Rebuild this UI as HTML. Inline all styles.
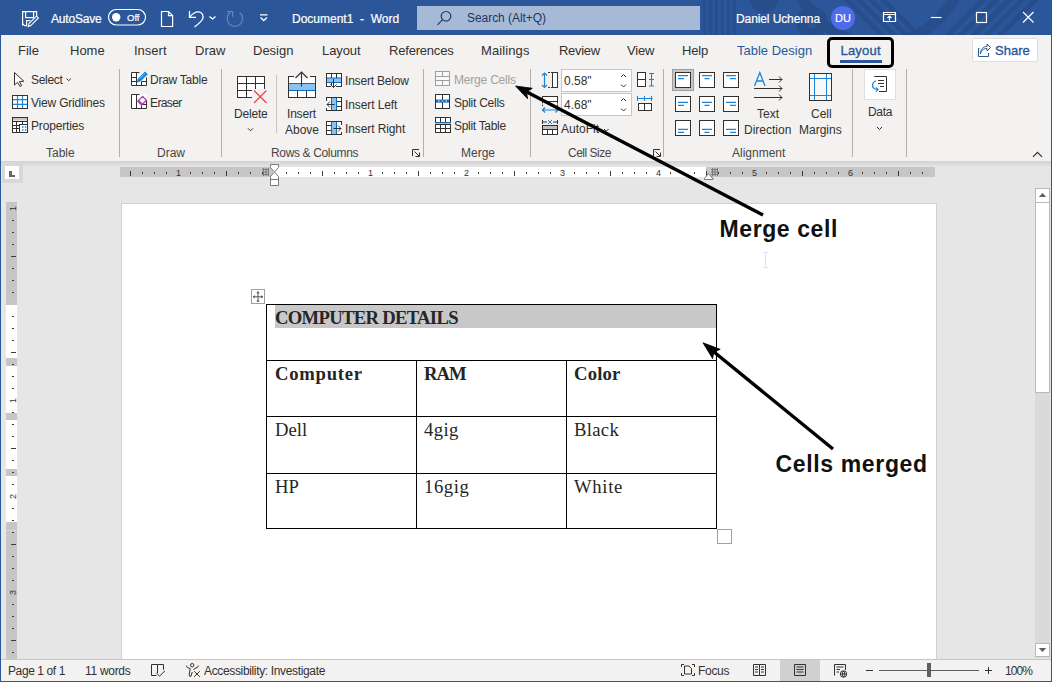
<!DOCTYPE html>
<html><head><meta charset="utf-8">
<style>
*{margin:0;padding:0;box-sizing:border-box}
html,body{width:1052px;height:682px;overflow:hidden}
body{background:#2b579a;position:relative;font-family:"Liberation Sans",sans-serif;color:#262626}
.a{position:absolute}
.t{position:absolute;white-space:pre;line-height:1}
#title{left:0;top:0;width:1052px;height:35px;background:#2b579a;overflow:hidden}
#ribbon{left:1px;top:35px;width:1050px;height:126px;background:#f3f2f1}
#doc{left:1px;top:162px;width:1050px;height:497px;background:#e6e6e6;overflow:hidden}
#status{left:1px;top:659px;width:1050px;height:22px;background:#f3f2f1;border-top:1px solid #c8c6c4}
.tw{color:#fff;font-size:12.5px;-webkit-text-stroke:0.2px #fff}
.tab{font-size:13px;color:#323130;top:44px}
.bd{-webkit-text-stroke:0.35px currentColor}
.rb{font-size:12px;color:#323130}
.gl{font-size:12px;color:#484644;top:147px}
.sep{position:absolute;width:1px;background:#c8c6c4;top:69px;height:88px}
.sb{font-size:12px;color:#323130;top:665px}
</style></head><body>
<div id="title" class="a">
  <svg class="a" style="left:0;top:0" width="1052" height="35">
    <g fill="#274d8b">
      <rect x="703" y="0" width="2.5" height="35"/><rect x="709" y="0" width="2.5" height="35"/><rect x="715" y="0" width="2.5" height="35"/><rect x="721" y="0" width="2.5" height="35"/><rect x="727" y="0" width="2.5" height="35"/><rect x="733" y="0" width="2.5" height="35"/>
      <circle cx="764" cy="-1" r="14"/>
    </g>
    <g fill="none" stroke="#274d8b">
      <circle cx="812" cy="22" r="11" stroke-width="10"/>
      <path d="M920 -35 A 90 90 0 0 1 925 40" stroke-width="0"/>
      <circle cx="878" cy="-42" r="86" stroke-width="11"/>
      <path d="M845 -2 L885 38 M857 -2 L897 38 M869 -2 L909 38 M881 -2 L921 38" stroke-width="5"/>
      <path d="M985 -2 L945 38 M998 -2 L958 38 M1011 -2 L971 38 M1024 -2 L984 38 M1037 -2 L997 38" stroke-width="5"/>
    </g>
    <g fill="none" stroke="#fff" stroke-width="1.2">
      <path d="M22.6 25.6 V11.6 H36.6 V16.5"/>
      <path d="M22.6 23.6 L24.6 25.6 H26.6 V20.6 H30.5"/>
      <path d="M25.6 11.6 V17.6 H33.6 V11.6"/>
      <path d="M28.3 26.6 L29 23.5 L36.6 16.2 L38.4 18 L30.8 25.6 Z" stroke-width="1.1"/>
      <rect x="108.5" y="9.5" width="37" height="15.5" rx="7.75"/>
      <path d="M161.5 11.5 H168.5 L172.6 15.6 V26.5 H161.5 Z M168.5 11.5 V15.6 H172.6"/>
      <path d="M189.5 11 V17.4 H196" stroke-width="1.3"/>
      <path d="M189.9 17.1 C192.5 13.2 196 11.6 199 11.8 C202.5 12.2 203.9 16 202.6 19 C201.2 22 197.5 24.6 194.5 26.9" stroke-width="1.3"/>
      <path d="M209.5 16.4 L212.5 19 L215.5 16.4" stroke-width="1.3"/>
      <path d="M260 14.8 H267.5 M260.5 17.5 L263.7 20.5 L267 17.5" stroke-width="1.3"/>
      <g opacity="0.28"><path d="M239.6 12.6 A7.7 7.7 0 1 1 230.2 12.6" stroke-width="1.2"/><path d="M227 11.6 H232.6 V16.8" stroke-width="1.2"/></g>
      <path d="M883.5 12.5 H895.5 V21.5 H883.5 Z M883.5 14.5 H895.5 M889.5 20.5 V16.5 M887.5 18 L889.5 16 L891.5 18"/>
      <path d="M931 17.5 H941.5"/>
      <rect x="976.5" y="12.5" width="10" height="10"/>
      <path d="M1023 12 L1033.5 22.5 M1033.5 12 L1023 22.5"/>
    </g>
    <circle cx="116.2" cy="17.2" r="4.2" fill="#fff"/>
    <rect x="417" y="6" width="283" height="24" fill="#a6bad8"/>
    <g fill="none" stroke="#1e3c6b" stroke-width="1.2"><circle cx="446" cy="16.3" r="4.8"/><path d="M442.6 19.7 L437.4 24.9"/></g>
    <circle cx="843" cy="18" r="12" fill="#4f6bed"/>
  </svg>
  <div class="t tw" style="left:51px;top:13.3px;font-size:12px;letter-spacing:-0.2px">AutoSave</div>
  <div class="t tw" style="left:127px;top:13px;font-size:9.5px">Off</div>
  <div class="t tw" style="left:292px;top:13.3px;font-size:12px">Document1  -  Word</div>
  <div class="t" style="left:467px;top:12px;font-size:12px;color:#1b365f;letter-spacing:-0.05px">Search (Alt+Q)</div>
  <div class="t tw" style="left:736px;top:13.3px;font-size:12px;letter-spacing:-0.1px">Daniel Uchenna</div>
  <div class="t tw" style="left:835px;top:13px;font-size:11px">DU</div>
</div>
<div id="ribbon" class="a"></div>
<div class="t tab" style="left:18px">File</div>
<div class="t tab" style="left:70px">Home</div>
<div class="t tab" style="left:134px">Insert</div>
<div class="t tab" style="left:195px">Draw</div>
<div class="t tab" style="left:253px">Design</div>
<div class="t tab" style="left:322px;letter-spacing:-0.1px">Layout</div>
<div class="t tab" style="left:389px;letter-spacing:-0.2px">References</div>
<div class="t tab" style="left:481px;letter-spacing:0.1px">Mailings</div>
<div class="t tab" style="left:559px;letter-spacing:-0.3px">Review</div>
<div class="t tab" style="left:627px;letter-spacing:-0.2px">View</div>
<div class="t tab" style="left:682px;letter-spacing:-0.2px">Help</div>
<div class="t tab" style="left:737px;color:#2b579a">Table Design</div>
<div class="t tab bd" style="left:840.5px;color:#2b579a;letter-spacing:0.2px">Layout</div>
<div class="a" style="left:840px;top:60px;width:42px;height:3px;background:#2b579a"></div>
<div class="a" style="left:827px;top:37px;width:67px;height:31px;border:3px solid #000;border-radius:5px"></div>
<div class="a" style="left:972px;top:38px;width:66px;height:24px;background:#fff;border:1px solid #e1dfdd;border-radius:2px"></div>
<div class="t tab bd" style="left:995px;top:44px;color:#2b579a">Share</div>
<svg class="a" style="left:976px;top:42px" width="16" height="16"><g fill="none" stroke="#2b579a" stroke-width="1"><path d="M3.5 6.5 H2.5 V14.5 H12.5 V11"/><path d="M4.5 12 C5 8 8 6.5 11 6.5 V9 L14.5 5.5 L11 2 V4.5 C7 4.5 4.5 7.5 4.5 12 Z"/></g></svg>
<!--RIBBONBODY-->
<svg class="a" style="left:0;top:0" width="1052" height="170">
 <g fill="none" stroke="#b3b0ad" stroke-width="1">
  <path d="M119.5 69 V157 M221.5 69 V157 M423.5 69 V157 M530.5 69 V157 M663.5 69 V157 M852.5 69 V157 M906.5 69 V157"/><path d="M276.5 75 V133" stroke="#c8c6c4"/>
 </g>
 <!-- select cursor -->
 <path d="M14.5 72.5 V85 L17.6 82.3 L20 86.5 L21.6 85.6 L19.4 81.5 L23.8 81.2 Z" fill="#fff" stroke="#323130" stroke-width="1" stroke-linejoin="round"/>
 <path d="M66.5 78.5 L68.7 80.7 L70.9 78.5" fill="none" stroke="#323130" stroke-width="1"/>
 <!-- view gridlines -->
 <rect x="12.5" y="95.5" width="15" height="13" fill="#fff" stroke="#323130"/>
 <path d="M17.5 96 V108 M22.5 96 V108 M13 99.7 H27 M13 104.3 H27" stroke="#1b84d8" stroke-width="1.2"/>
 <!-- properties -->
 <rect x="12.5" y="117.5" width="15" height="15" fill="#fff" stroke="#323130"/>
 <rect x="13" y="118" width="14" height="2.5" fill="#c8c6c4"/>
 <path d="M13 121.5 H27 M13 125.5 H19 M13 128.5 H19 M16.5 121.5 V132.5 M22.5 121.5 V124" stroke="#323130" stroke-width="1" fill="none"/>
 <rect x="19.5" y="124.5" width="8" height="8" fill="#fff" stroke="#323130"/>
 <path d="M22 127 h1.5 M24.8 127 h1.5 M22 130 h1.5 M24.8 130 h1.5" stroke="#1b84d8" stroke-width="1.4"/>
 <!-- draw table -->
 <rect x="131.5" y="72.5" width="15" height="13" fill="#fff"/>
 <rect x="131.5" y="94.5" width="15" height="14" fill="#fff"/>
 <g fill="none" stroke="#323130" stroke-width="1">
  <path d="M131.5 85.5 V72.5 H139.5 M146.5 77.5 V85.5 H131.5 M136.5 72.5 V85.5 M141.5 81.5 V85.5 M131.5 77.5 H136.5 M131.5 81.5 H137 M141.5 81.5 H146.5"/>
  <path d="M131.5 108.5 V94.5 H139.5 M146.5 100.5 V108.5 H131.5 M136.5 94.5 V108.5 M141.5 104.5 V108.5 M141.5 104.5 H146.5"/>
 </g>
 <path d="M137.3 82 L138.3 78.6 L145 71.9 L147.3 74.2 L140.6 80.9 Z" fill="#1b84d8" stroke="#1b84d8" stroke-width="1" stroke-linejoin="round"/>
 <path d="M139.8 78.4 L144.9 73.3" stroke="#fff" stroke-width="0.8" stroke-dasharray="1.2 1"/>
 <path d="M137.8 101.2 L142.6 96.4 L146.4 100.2 L141.6 105 Z" fill="#fff" stroke="#a83cb5" stroke-width="1.3" stroke-linejoin="round"/>
 <path d="M137.8 101.2 L139 100 L142.8 103.8 L141.6 105 Z" fill="#a83cb5"/>
 <!-- delete -->
 <rect x="237.5" y="76.5" width="27" height="21" fill="#fff" stroke="#323130"/>
 <path d="M246.5 77 V97 M255.5 77 V97 M238 83.5 H264 M238 90.5 H264" stroke="#323130" fill="none"/>
 <rect x="252" y="89" width="16" height="15" fill="#f3f2f1"/>
 <path d="M238 90.5 H252 M246.5 90.5 V97 M238 97.5 H252 M264.5 77 V89" stroke="#323130" fill="none"/>
 <path d="M254 90.5 L266.5 103 M266.5 90.5 L254 103" stroke="#e8474b" stroke-width="1.3"/>
 <path d="M248 128.3 L250.5 130.8 L253 128.3" fill="none" stroke="#323130"/>
 <!-- insert above -->
 <rect x="288.5" y="76.5" width="27" height="21" fill="#fff" stroke="#323130"/>
 <rect x="289" y="83.5" width="26" height="7" fill="#8cc2f0"/>
 <path d="M289 83.5 H315 M289 90.5 H315" stroke="#1068b9" stroke-width="1.2"/>
 <path d="M297.5 91 V97 M306.5 91 V97" stroke="#323130"/>
 <rect x="294" y="74" width="16" height="4" fill="#f3f2f1"/>
 <path d="M288.5 77 V76.5 H294 M310 76.5 H315.5" stroke="#323130" fill="none"/>
 <path d="M301.5 86.5 V72 M295.5 78 L301.5 72 L307.5 78" stroke="#323130" fill="none" stroke-width="1.1"/>
 <!-- insert below -->
 <rect x="326.5" y="73.5" width="15" height="13" fill="#fff" stroke="#323130"/>
 <rect x="327" y="78" width="14" height="4.5" fill="#8cc2f0"/>
 <path d="M327 78 H341 M327 82.5 H341" stroke="#1068b9" stroke-width="1"/>
 <path d="M331.5 74 V78 M336.5 74 V78 M331.5 83 V86" stroke="#323130"/>
 <rect x="331" y="86" width="5" height="2" fill="#f3f2f1"/>
 <path d="M333.5 79 V87.5 M330.5 84.5 L333.5 87.5 L336.5 84.5" stroke="#323130" fill="none"/>
 <!-- insert left -->
 <rect x="326.5" y="97.5" width="15" height="13" fill="#fff" stroke="#323130"/>
 <rect x="331.5" y="98" width="5" height="12" fill="#8cc2f0"/>
 <path d="M331.5 98 V110 M336.5 98 V110" stroke="#1068b9"/>
 <path d="M337 101.5 H341 M337 106.5 H341" stroke="#323130"/>
 <rect x="326" y="101" width="1.5" height="7" fill="#fff"/>
 <path d="M334.5 104.5 H327 M330 101.5 L327 104.5 L330 107.5" stroke="#323130" fill="none"/>
 <!-- insert right -->
 <rect x="326.5" y="121.5" width="15" height="13" fill="#fff" stroke="#323130"/>
 <rect x="331.5" y="122" width="5" height="12" fill="#8cc2f0"/>
 <path d="M331.5 122 V134 M336.5 122 V134" stroke="#1068b9"/>
 <path d="M327 125.5 H331 M327 130.5 H331" stroke="#323130"/>
 <rect x="340.5" y="125" width="1.5" height="7" fill="#fff"/>
 <path d="M333.5 128.5 H341 M338 125.5 L341 128.5 L338 131.5" stroke="#323130" fill="none"/>
 <path d="M412.5 156 V149.5 H419 M414.5 151.5 L419 156 M419.5 152.5 V156.5 H415.5" stroke="#323130" fill="none"/>
 <!-- merge cells -->
 <rect x="435.5" y="71.5" width="14" height="14" fill="#f8f8f8" stroke="#a19f9d"/>
 <path d="M436 76.5 H449 M436 80.5 H449 M442.5 72 V76.5 M442.5 80.5 V85" stroke="#a19f9d" fill="none"/>
 <!-- split cells -->
 <rect x="435.5" y="94.5" width="14" height="14" fill="#fff" stroke="#323130"/>
 <path d="M442.5 95 V108" stroke="#323130"/>
 <rect x="436" y="99.6" width="13" height="3" fill="#1068b9"/>
 <path d="M438 101 h1.5 M441.7 101 h1.5 M445.4 101 h1.5" stroke="#fff" stroke-width="1.2"/>
 <!-- split table -->
 <rect x="435.5" y="117.5" width="15" height="5" fill="#fff" stroke="#323130"/>
 <path d="M440.5 118 V122 M445.5 118 V122" stroke="#323130"/>
 <path d="M435 122.8 H451 M435 124.3 H451" stroke="#1b84d8" stroke-width="1"/>
 <rect x="435.5" y="124.5" width="15" height="8" fill="#fff" stroke="#323130"/>
 <path d="M436 128.5 H450 M440.5 125 V132 M445.5 125 V132" stroke="#323130"/>
 <!-- height icon -->
 <path d="M544.5 73 V87.5 M542 75.5 L544.5 73 L547 75.5 M542 85 L544.5 87.5 L547 85" stroke="#1b84d8" fill="none" stroke-width="1.2"/>
 <path d="M548 72.5 H552 M548 87.5 H552" stroke="#323130" stroke-dasharray="2 1"/>
 <rect x="552.5" y="72.5" width="5" height="15" fill="#fff" stroke="#323130"/>
 <!-- inputs -->
 <rect x="561.5" y="69.5" width="70" height="22" fill="#fff" stroke="#c8c6c4"/>
 <rect x="561.5" y="93.5" width="70" height="22" fill="#fff" stroke="#c8c6c4"/>
 <path d="M621 77 L623.5 74.5 L626 77 M621 84.5 L623.5 87 L626 84.5 M621 101 L623.5 98.5 L626 101 M621 108.5 L623.5 111 L626 108.5" stroke="#323130" fill="none"/>
 <!-- width icon -->
 <rect x="542.5" y="96.5" width="15" height="5" fill="#fff" stroke="#323130"/>
 <path d="M542.5 102 V106 M557.5 102 V106" stroke="#323130" stroke-dasharray="1.5 1"/>
 <path d="M542.5 110 H558 M545 107.5 L542.5 110 L545 112.5 M555.5 107.5 L558 110 L555.5 112.5" stroke="#1b84d8" fill="none" stroke-width="1.2"/>
 <!-- distribute rows -->
 <rect x="637.5" y="72.5" width="8" height="14" fill="#fff" stroke="#323130"/>
 <path d="M638 79.5 H645" stroke="#323130"/>
 <path d="M651.5 73 V86.5 M649 73.5 H654 M649 79.5 H654 M649 86 H654" stroke="#1b84d8" fill="none" stroke-width="1.1"/>
 <!-- distribute cols -->
 <path d="M637 98.5 H652.5 M637.5 96 V101 M644.5 96 V101 M651.5 96 V101" stroke="#1b84d8" fill="none" stroke-width="1.1"/>
 <rect x="638.5" y="103.5" width="13" height="7" fill="#fff" stroke="#323130"/>
 <path d="M644.5 104 V110" stroke="#323130"/>
 <!-- autofit -->
 <path d="M542.5 120 V124 M557.5 120 V124 M542.5 122 H547 M553 122 H557.5" stroke="#323130" fill="none"/>
 <path d="M548 120 L552 124 M552 120 L548 124" stroke="#1b84d8" stroke-width="1"/>
 <rect x="542.5" y="125.5" width="15" height="9" fill="#fff" stroke="#323130"/>
 <rect x="543" y="126" width="14" height="3" fill="#bebebe"/>
 <path d="M543 129.5 H557 M547.5 130 V134 M552.5 130 V134" stroke="#323130"/>
 <path d="M604 129 L606.3 131.3 L608.6 129" stroke="#323130" fill="none"/>
 <path d="M653.5 156 V149.5 H660 M655.5 151.5 L660 156 M660.5 152.5 V156.5 H656.5" stroke="#323130" fill="none"/>
 <!-- alignment -->
 <rect x="672.5" y="69.5" width="21" height="21" fill="#c8c6c4" stroke="#a19f9d"/>
 <g fill="#fff" stroke="#323130">
  <rect x="675.5" y="72.5" width="15" height="15"/><rect x="699.5" y="72.5" width="15" height="15"/><rect x="723.5" y="72.5" width="15" height="15"/>
  <rect x="675.5" y="96.5" width="15" height="15"/><rect x="699.5" y="96.5" width="15" height="15"/><rect x="723.5" y="96.5" width="15" height="15"/>
  <rect x="675.5" y="120.5" width="15" height="15"/><rect x="699.5" y="120.5" width="15" height="15"/><rect x="723.5" y="120.5" width="15" height="15"/>
 </g>
 <g stroke="#1b84d8" stroke-width="1.2" fill="none">
  <path d="M678 75.6 H688 M678 78.6 H684 M702 75.6 H712 M704.5 78.6 H709.5 M726 75.6 H736 M730 78.6 H736"/>
  <path d="M678 102.4 H688 M678 105.4 H684 M702 102.4 H712 M704.5 105.4 H709.5 M726 102.4 H736 M730 105.4 H736"/>
  <path d="M678 129.4 H688 M678 132.4 H684 M702 129.4 H712 M704.5 132.4 H709.5 M726 129.4 H736 M730 132.4 H736"/>
 </g>
 <path d="M754.5 86 L759.8 72.5 L765 86 M756.6 81 H763" stroke="#1b84d8" stroke-width="1.3" fill="none"/>
 <path d="M769 79.5 H782 M779 76.5 L782 79.5 L779 82.5 M754 88.5 H782 M779 85.5 L782 88.5 L779 91.5 M754 97.5 H782 M779 94.5 L782 97.5 L779 100.5" stroke="#323130" stroke-width="1" fill="none"/>
 <!-- cell margins -->
 <rect x="809.5" y="73.5" width="22" height="27" fill="#f8f8f8" stroke="#323130"/>
 <path d="M814.5 74 V100 M826.5 74 V100 M810 78.5 H831 M810 95.5 H831" stroke="#1b84d8" stroke-width="1"/>
 <!-- data -->
 <rect x="864.5" y="69.5" width="31" height="30" fill="#fff" stroke="#e1dfdd"/>
 <path d="M874.5 77 V76.5 H886.5 V91.5 H879" stroke="#323130" fill="none"/>
 <path d="M878 80.5 H884 M878 83.5 H884 M880 86.5 H884" stroke="#323130" fill="none"/>
 <path d="M876 81 C872 82 871 87 875 89 L878 89.5 M876 87.5 L878 89.5 L876 91.5" stroke="#1b84d8" fill="none" stroke-width="1.2"/>
 <path d="M877 127 L879.5 129.5 L882 127" stroke="#323130" fill="none"/>
 <path d="M1033 156.8 L1037.5 152.3 L1042 156.8" stroke="#323130" stroke-width="1.2" fill="none"/>
</svg>
<div class="t rb" style="left:31px;top:74px;letter-spacing:-0.3px">Select</div>
<div class="t rb" style="left:31px;top:96.8px;letter-spacing:-0.2px">View Gridlines</div>
<div class="t rb" style="left:31px;top:120.3px;letter-spacing:-0.15px">Properties</div>
<div class="t gl" style="left:46px;top:147.3px">Table</div>
<div class="t rb" style="left:150px;top:74px;letter-spacing:-0.25px">Draw Table</div>
<div class="t rb" style="left:150px;top:96.8px;letter-spacing:-0.6px">Eraser</div>
<div class="t gl" style="left:157px;top:147.3px">Draw</div>
<div class="t rb" style="left:234px;top:108.3px;letter-spacing:-0.2px">Delete</div>
<div class="t rb" style="left:287px;top:108.3px;letter-spacing:-0.2px">Insert</div>
<div class="t rb" style="left:285px;top:123.7px">Above</div>
<div class="t rb" style="left:345px;top:74.8px;letter-spacing:-0.2px">Insert Below</div>
<div class="t rb" style="left:345px;top:98.8px;letter-spacing:-0.1px">Insert Left</div>
<div class="t rb" style="left:345px;top:123px;letter-spacing:-0.1px">Insert Right</div>
<div class="t gl" style="left:271px;top:147.3px;letter-spacing:-0.35px">Rows &amp; Columns</div>
<div class="t rb" style="left:454px;top:74px;color:#a19f9d;letter-spacing:-0.2px">Merge Cells</div>
<div class="t rb" style="left:454px;top:96.8px;letter-spacing:-0.25px">Split Cells</div>
<div class="t rb" style="left:454px;top:120px;letter-spacing:-0.3px">Split Table</div>
<div class="t gl" style="left:461px;top:147.3px">Merge</div>
<div class="t rb" style="left:564px;top:75.3px">0.58"</div>
<div class="t rb" style="left:564px;top:99.4px">4.68"</div>
<div class="t rb" style="left:561px;top:123.2px">AutoFit</div>
<div class="t gl" style="left:568px;top:147.3px;letter-spacing:-0.5px">Cell Size</div>
<div class="t rb" style="left:757px;top:107.6px">Text</div>
<div class="t rb" style="left:744px;top:123.6px">Direction</div>
<div class="t rb" style="left:811px;top:107.6px">Cell</div>
<div class="t rb" style="left:799px;top:123.6px">Margins</div>
<div class="t gl" style="left:732px;top:147.3px">Alignment</div>
<div class="t rb" style="left:868px;top:106.1px;letter-spacing:-0.3px">Data</div>
<div class="a" style="left:1px;top:161px;width:1050px;height:1px;background:#d6d4d2"></div>
<div id="doc" class="a">
  <div class="a" style="left:0;top:0;width:1050px;height:5px;background:linear-gradient(#d6d4d2,#e6e6e6)"></div>
  <div class="a" style="left:1px;top:0;width:21px;height:21px;background:#d8d8d8"></div>
  <div class="a" style="left:4px;top:4px;width:14px;height:13px;background:#fff"></div>
  <div class="a" style="left:8px;top:9px;width:2.5px;height:6px;background:#666"></div>
  <div class="a" style="left:8px;top:13px;width:6px;height:2px;background:#666"></div>
  <div class="a" style="left:120px;top:41px;width:816px;height:460px;background:#fff;border:1px solid #d0d0d0;border-bottom:none"></div>
  <div class="a" style="left:1034px;top:26px;width:15px;height:470px;background:#dadada"></div>
  <div class="a" style="left:1034px;top:26px;width:15px;height:205px;background:#fff;border:1px solid #b9b9b9"></div>
  <div class="a" style="left:1034px;top:26px;width:15px;height:15px;background:#fff;border:1px solid #b9b9b9"></div>
  <div class="a" style="left:1034px;top:481px;width:15px;height:14px;background:#fff;border:1px solid #b9b9b9"></div>
</div>
<svg class="a" style="left:0;top:0" width="1052" height="682">
<rect x="120" y="167" width="815" height="10" fill="#c6c6c6"/>
<rect x="273" y="167" width="433" height="10" fill="#fff"/>
<rect x="130" y="171" width="1" height="5" fill="#3b3b3b"/>
<rect x="142" y="172" width="1" height="2" fill="#3b3b3b"/>
<rect x="154" y="172" width="1" height="2" fill="#3b3b3b"/>
<rect x="166" y="172" width="1" height="2" fill="#3b3b3b"/>
<rect x="190" y="172" width="1" height="2" fill="#3b3b3b"/>
<rect x="202" y="172" width="1" height="2" fill="#3b3b3b"/>
<rect x="214" y="172" width="1" height="2" fill="#3b3b3b"/>
<rect x="226" y="171" width="1" height="5" fill="#3b3b3b"/>
<rect x="238" y="172" width="1" height="2" fill="#3b3b3b"/>
<rect x="250" y="172" width="1" height="2" fill="#3b3b3b"/>
<rect x="262" y="172" width="1" height="2" fill="#3b3b3b"/>
<rect x="286" y="172" width="1" height="2" fill="#3b3b3b"/>
<rect x="298" y="172" width="1" height="2" fill="#3b3b3b"/>
<rect x="310" y="172" width="1" height="2" fill="#3b3b3b"/>
<rect x="322" y="171" width="1" height="5" fill="#3b3b3b"/>
<rect x="334" y="172" width="1" height="2" fill="#3b3b3b"/>
<rect x="346" y="172" width="1" height="2" fill="#3b3b3b"/>
<rect x="358" y="172" width="1" height="2" fill="#3b3b3b"/>
<rect x="382" y="172" width="1" height="2" fill="#3b3b3b"/>
<rect x="394" y="172" width="1" height="2" fill="#3b3b3b"/>
<rect x="406" y="172" width="1" height="2" fill="#3b3b3b"/>
<rect x="418" y="171" width="1" height="5" fill="#3b3b3b"/>
<rect x="430" y="172" width="1" height="2" fill="#3b3b3b"/>
<rect x="442" y="172" width="1" height="2" fill="#3b3b3b"/>
<rect x="454" y="172" width="1" height="2" fill="#3b3b3b"/>
<rect x="478" y="172" width="1" height="2" fill="#3b3b3b"/>
<rect x="490" y="172" width="1" height="2" fill="#3b3b3b"/>
<rect x="502" y="172" width="1" height="2" fill="#3b3b3b"/>
<rect x="514" y="171" width="1" height="5" fill="#3b3b3b"/>
<rect x="526" y="172" width="1" height="2" fill="#3b3b3b"/>
<rect x="538" y="172" width="1" height="2" fill="#3b3b3b"/>
<rect x="550" y="172" width="1" height="2" fill="#3b3b3b"/>
<rect x="574" y="172" width="1" height="2" fill="#3b3b3b"/>
<rect x="586" y="172" width="1" height="2" fill="#3b3b3b"/>
<rect x="598" y="172" width="1" height="2" fill="#3b3b3b"/>
<rect x="610" y="171" width="1" height="5" fill="#3b3b3b"/>
<rect x="622" y="172" width="1" height="2" fill="#3b3b3b"/>
<rect x="634" y="172" width="1" height="2" fill="#3b3b3b"/>
<rect x="646" y="172" width="1" height="2" fill="#3b3b3b"/>
<rect x="670" y="172" width="1" height="2" fill="#3b3b3b"/>
<rect x="682" y="172" width="1" height="2" fill="#3b3b3b"/>
<rect x="694" y="172" width="1" height="2" fill="#3b3b3b"/>
<rect x="706" y="171" width="1" height="5" fill="#3b3b3b"/>
<rect x="718" y="172" width="1" height="2" fill="#3b3b3b"/>
<rect x="730" y="172" width="1" height="2" fill="#3b3b3b"/>
<rect x="742" y="172" width="1" height="2" fill="#3b3b3b"/>
<rect x="766" y="172" width="1" height="2" fill="#3b3b3b"/>
<rect x="778" y="172" width="1" height="2" fill="#3b3b3b"/>
<rect x="790" y="172" width="1" height="2" fill="#3b3b3b"/>
<rect x="802" y="171" width="1" height="5" fill="#3b3b3b"/>
<rect x="814" y="172" width="1" height="2" fill="#3b3b3b"/>
<rect x="826" y="172" width="1" height="2" fill="#3b3b3b"/>
<rect x="838" y="172" width="1" height="2" fill="#3b3b3b"/>
<rect x="862" y="172" width="1" height="2" fill="#3b3b3b"/>
<rect x="874" y="172" width="1" height="2" fill="#3b3b3b"/>
<rect x="886" y="172" width="1" height="2" fill="#3b3b3b"/>
<rect x="898" y="171" width="1" height="5" fill="#3b3b3b"/>
<rect x="910" y="172" width="1" height="2" fill="#3b3b3b"/>
<rect x="922" y="172" width="1" height="2" fill="#3b3b3b"/>
<text x="178.5" y="176" font-size="9" text-anchor="middle" fill="#333" font-family="Liberation Sans">1</text>
<text x="370.5" y="176" font-size="9" text-anchor="middle" fill="#333" font-family="Liberation Sans">1</text>
<text x="466.5" y="176" font-size="9" text-anchor="middle" fill="#333" font-family="Liberation Sans">2</text>
<text x="562.5" y="176" font-size="9" text-anchor="middle" fill="#333" font-family="Liberation Sans">3</text>
<text x="658.5" y="176" font-size="9" text-anchor="middle" fill="#333" font-family="Liberation Sans">4</text>
<text x="754.5" y="176" font-size="9" text-anchor="middle" fill="#333" font-family="Liberation Sans">5</text>
<text x="850.5" y="176" font-size="9" text-anchor="middle" fill="#333" font-family="Liberation Sans">6</text>
<g stroke="#7a7a7a" stroke-width="1"><path d="M262 169.5 H269 M262 172 H269 M262 174.5 H269 M263.5 168 V176 M266 168 V176 M268.5 168 V176"/></g>
<g stroke="#7a7a7a" stroke-width="1"><path d="M711 169.5 H718 M711 172 H718 M711 174.5 H718 M712.5 168 V176 M715 168 V176 M717.5 168 V176"/></g>
<path d="M270.5 164.5 H278.5 V167.5 L274.5 172 L270.5 167.5 Z" fill="#fff" stroke="#7a7a7a"/>
<path d="M274.5 172 L270.5 176.5 V185.5 H278.5 V176.5 Z" fill="#fff" stroke="#7a7a7a"/>
<path d="M270.5 179.5 H278.5" stroke="#7a7a7a"/>
<path d="M708.5 174.5 L704.5 178.5 V179.5 H713 V178.5 L709 174.5 Z" fill="#fff" stroke="#7a7a7a"/>
<path d="M704.5 178.5 L708.5 173.5 L712.5 178.5 V179.5 H704.5 Z" fill="#fff" stroke="#7a7a7a"/>
<rect x="6" y="202" width="11" height="460" fill="#c6c6c6"/>
<rect x="6" y="305" width="11" height="53" fill="#fff"/>
<rect x="6" y="366" width="11" height="47" fill="#fff"/>
<rect x="6" y="420" width="11" height="49" fill="#fff"/>
<rect x="6" y="476" width="11" height="46" fill="#fff"/>
<text x="0" y="0" font-size="9" text-anchor="middle" fill="#333" font-family="Liberation Sans" transform="translate(16 208.5) rotate(-90)">1</text>
<rect x="12" y="220" width="2" height="1" fill="#3b3b3b"/>
<rect x="12" y="232" width="2" height="1" fill="#3b3b3b"/>
<rect x="12" y="244" width="2" height="1" fill="#3b3b3b"/>
<rect x="11" y="256" width="5" height="1" fill="#3b3b3b"/>
<rect x="12" y="268" width="2" height="1" fill="#3b3b3b"/>
<rect x="12" y="280" width="2" height="1" fill="#3b3b3b"/>
<rect x="12" y="292" width="2" height="1" fill="#3b3b3b"/>
<rect x="12" y="316" width="2" height="1" fill="#3b3b3b"/>
<rect x="12" y="328" width="2" height="1" fill="#3b3b3b"/>
<rect x="12" y="340" width="2" height="1" fill="#3b3b3b"/>
<rect x="11" y="352" width="5" height="1" fill="#3b3b3b"/>
<rect x="12" y="364" width="2" height="1" fill="#3b3b3b"/>
<rect x="12" y="376" width="2" height="1" fill="#3b3b3b"/>
<rect x="12" y="388" width="2" height="1" fill="#3b3b3b"/>
<text x="0" y="0" font-size="9" text-anchor="middle" fill="#333" font-family="Liberation Sans" transform="translate(16 400.5) rotate(-90)">1</text>
<rect x="12" y="412" width="2" height="1" fill="#3b3b3b"/>
<rect x="12" y="424" width="2" height="1" fill="#3b3b3b"/>
<rect x="12" y="436" width="2" height="1" fill="#3b3b3b"/>
<rect x="11" y="448" width="5" height="1" fill="#3b3b3b"/>
<rect x="12" y="460" width="2" height="1" fill="#3b3b3b"/>
<rect x="12" y="472" width="2" height="1" fill="#3b3b3b"/>
<rect x="12" y="484" width="2" height="1" fill="#3b3b3b"/>
<text x="0" y="0" font-size="9" text-anchor="middle" fill="#333" font-family="Liberation Sans" transform="translate(16 496.5) rotate(-90)">2</text>
<rect x="12" y="508" width="2" height="1" fill="#3b3b3b"/>
<rect x="12" y="520" width="2" height="1" fill="#3b3b3b"/>
<rect x="12" y="532" width="2" height="1" fill="#3b3b3b"/>
<rect x="11" y="544" width="5" height="1" fill="#3b3b3b"/>
<rect x="12" y="556" width="2" height="1" fill="#3b3b3b"/>
<rect x="12" y="568" width="2" height="1" fill="#3b3b3b"/>
<rect x="12" y="580" width="2" height="1" fill="#3b3b3b"/>
<text x="0" y="0" font-size="9" text-anchor="middle" fill="#333" font-family="Liberation Sans" transform="translate(16 592.5) rotate(-90)">3</text>
<rect x="12" y="604" width="2" height="1" fill="#3b3b3b"/>
<rect x="12" y="616" width="2" height="1" fill="#3b3b3b"/>
<rect x="12" y="628" width="2" height="1" fill="#3b3b3b"/>
<rect x="11" y="640" width="5" height="1" fill="#3b3b3b"/>
<rect x="12" y="652" width="2" height="1" fill="#3b3b3b"/>
<rect x="6" y="530" width="11" height="1" fill="#d6d6d6"/>
<path d="M1038.8 197 L1042.5 193 L1046.2 197 Z" fill="#606060"/>
<path d="M1038.8 648 L1042.5 652 L1046.2 648 Z" fill="#606060"/>
</svg>
<div class="a" style="left:275px;top:305px;width:441px;height:22.5px;background:#c8c8c8"></div>
<svg class="a" style="left:0;top:0" width="1052" height="682">
 <g stroke="#000" stroke-width="1" fill="none">
  <rect x="266.5" y="304.5" width="450" height="224"/>
  <path d="M266.5 360.5 H716.5 M266.5 416.5 H716.5 M266.5 473.5 H716.5 M416.5 360.5 V528.5 M566.5 360.5 V528.5"/>
 </g>
 <rect x="251.5" y="289.5" width="13" height="14" fill="#fff" stroke="#a0a0a0"/>
 <path d="M258 291.5 V302 M253 296.8 H263" stroke="#555" stroke-width="1"/>
 <path d="M256.3 293.2 L258 291.3 L259.7 293.2 Z M256.3 300.4 L258 302.3 L259.7 300.4 Z M254.7 295.1 L252.8 296.8 L254.7 298.5 Z M261.3 295.1 L263.2 296.8 L261.3 298.5 Z" fill="#555"/>
 <rect x="717.5" y="529.5" width="14" height="14" fill="#fff" stroke="#a0a0a0"/>
 <path d="M765.5 252 V268 M763 252.5 H768 M763 267.5 H768" stroke="#e2e2e2" stroke-width="1"/>
</svg>
<div class="t" style="left:275px;top:308.6px;font-family:'Liberation Serif',serif;font-weight:700;font-size:18.67px;color:#262626;letter-spacing:-0.7px">COMPUTER DETAILS</div>
<div class="t" style="left:275px;top:365.4px;font-family:'Liberation Serif',serif;font-weight:700;font-size:18.67px;color:#262626;letter-spacing:0.75px">Computer</div>
<div class="t" style="left:424px;top:365.4px;font-family:'Liberation Serif',serif;font-weight:700;font-size:18.67px;color:#262626;letter-spacing:-1px">RAM</div>
<div class="t" style="left:574px;top:365.4px;font-family:'Liberation Serif',serif;font-weight:700;font-size:18.67px;color:#262626;letter-spacing:0.2px">Color</div>
<div class="t" style="left:275px;top:421.4px;font-family:'Liberation Serif',serif;font-size:18.67px;color:#262626">Dell</div>
<div class="t" style="left:424px;top:421.4px;font-family:'Liberation Serif',serif;font-size:18.67px;color:#262626;letter-spacing:0.4px">4gig</div>
<div class="t" style="left:574px;top:421.4px;font-family:'Liberation Serif',serif;font-size:18.67px;color:#262626;letter-spacing:0.3px">Black</div>
<div class="t" style="left:275px;top:478.4px;font-family:'Liberation Serif',serif;font-size:18.67px;color:#262626">HP</div>
<div class="t" style="left:424px;top:478.4px;font-family:'Liberation Serif',serif;font-size:18.67px;color:#262626;letter-spacing:0.6px">16gig</div>
<div class="t" style="left:574px;top:478.4px;font-family:'Liberation Serif',serif;font-size:18.67px;color:#262626;letter-spacing:0.7px">White</div>
<div class="t" style="left:719.5px;top:218px;font-weight:700;font-size:23px;color:#111;letter-spacing:0.6px">Merge cell</div>
<div class="t" style="left:775.5px;top:452.5px;font-weight:700;font-size:23px;color:#111;letter-spacing:0.65px">Cells merged</div>
<svg class="a" style="left:0;top:0" width="1052" height="682">
 <path d="M763 215 L524 90.5" stroke="#000" stroke-width="3.4" stroke-linecap="butt"/>
 <path d="M515.5 86 L532.3 88.3 L526.5 91.8 L527.6 98.8 Z" fill="#000" stroke="#000" stroke-width="0.8" stroke-linejoin="miter"/>
 <path d="M833 449 L711 349.5" stroke="#000" stroke-width="3.4"/>
 <path d="M703 342.8 L720.2 349.3 L713.8 352.2 L712.6 358.6 Z" fill="#000" stroke="#000" stroke-width="0.8"/>
</svg>

<div id="status" class="a"></div>
<div class="t sb" style="left:8px;top:664.5px;letter-spacing:-0.4px">Page 1 of 1</div>
<div class="t sb" style="left:85px;top:664.5px;letter-spacing:-0.3px">11 words</div>
<div class="t sb" style="left:204px;top:664.5px;letter-spacing:-0.35px">Accessibility: Investigate</div>
<div class="t sb" style="left:698px;top:664.5px;letter-spacing:-0.3px">Focus</div>
<div class="t sb" style="left:1005px;top:664.5px;letter-spacing:-0.9px">100%</div>
<div class="a" style="left:780px;top:660px;width:40px;height:21px;background:#d2d0ce"></div>
<svg class="a" style="left:0;top:0" width="1052" height="682">
 <g fill="none" stroke="#323130" stroke-width="1">
  <path d="M157.5 673 V664.5 H151.5 V675.5 H156.5 M157.5 664.5 H163.5 V669.8"/>
  <path d="M156.3 672.8 L159.5 676.2 L165 670.8"/>
  <circle cx="192.2" cy="665.2" r="1.7"/>
  <path d="M186.3 665.6 Q186.5 667.9 190.2 668.6 L189.2 674.8 Q189.2 677 190.9 676.3 L192.3 672"/>
  <path d="M198.4 665.6 Q198.3 667.7 194.6 668.6 L193.6 670"/>
  <path d="M194.2 671.2 L199.8 676.8 M199.8 671.2 L194.2 676.8"/>
  <path d="M681.5 667 V664.5 H684 M692 664.5 H694.5 V667 M681.5 673 V675.5 H684 M692 675.5 H694.5 V673"/>
  <path d="M684.5 666 H689 L691.5 668.5 V674 H684.5 Z"/>
  <path d="M753.5 664.5 H759.5 V675.5 H753.5 Z M759.5 664.5 H765.5 V675.5 H759.5 M755 667 H758 M755 669.5 H758 M755 672 H758 M761 667 H764 M761 669.5 H764 M761 672 H764"/>
  <path d="M794.5 664.5 H805.5 V675.5 H794.5 Z M796.5 667 H803.5 M796.5 669.5 H803.5 M796.5 672 H803.5"/>
  <path d="M834.5 675.5 V664.5 H845.5 V670 M836.5 667 H843.5 M836.5 669.5 H840 M836.5 672 H839"/>
  <circle cx="843.5" cy="674" r="3.2" fill="#f3f2f1"/>
  <path d="M840.3 674 H846.7 M843.5 670.8 C842 672.5 842 675.5 843.5 677.2 C845 675.5 845 672.5 843.5 670.8"/>
  <path d="M866 670.5 H873 M985 670.5 H992 M988.5 667 V674"/>
 </g>
 <rect x="879" y="670" width="100" height="1" fill="#605e5c"/>
 <rect x="927" y="663" width="4" height="14" fill="#605e5c"/>
</svg>
</body></html>
